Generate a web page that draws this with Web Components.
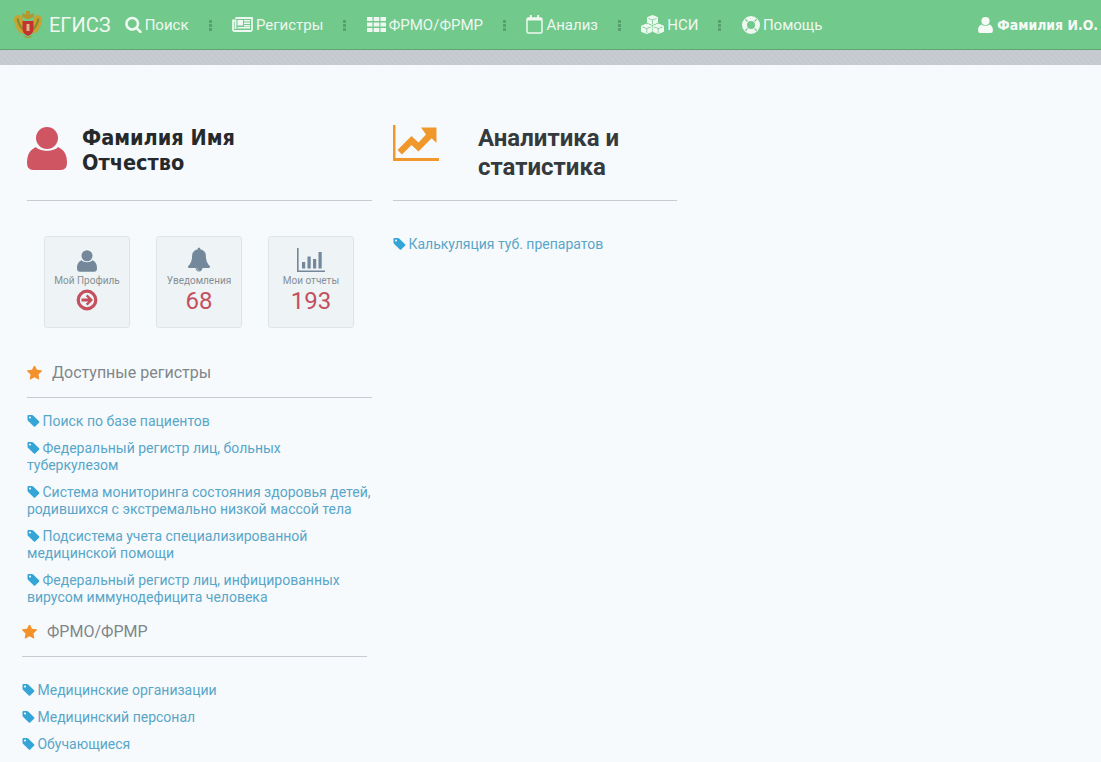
<!DOCTYPE html>
<html lang="ru">
<head>
<meta charset="utf-8">
<title>ЕГИСЗ</title>
<style>
  html, body { margin: 0; height: 762px; overflow: hidden; background: #f7fafd; font-family: Roboto, "Liberation Sans", sans-serif; }
</style>
</head>
<body>
<top-bar>
  <nav-link icon="search" iw="17">Поиск</nav-link>
  <nav-sep></nav-sep>
  <nav-link icon="news" iw="21">Регистры</nav-link>
  <nav-sep></nav-sep>
  <nav-link icon="grid" iw="19">ФРМО/ФРМР</nav-link>
  <nav-sep></nav-sep>
  <nav-link icon="calendar" iw="17">Анализ</nav-link>
  <nav-sep></nav-sep>
  <nav-link icon="cubes" iw="23">НСИ</nav-link>
  <nav-sep></nav-sep>
  <nav-link icon="ring" iw="18">Помощь</nav-link>
</top-bar>
<page-main>
  <page-col style="width:345px">
    <big-head icon="user" color="#cf5563" iw="40" ih="43" gap="15" fs="21.5" lh="25" font="'DejaVu Sans Condensed','DejaVu Sans'" ink="#26292c" top="2" tw="170" shift="0">Фамилия Имя Отчество</big-head>
    <stat-row>
      <stat-card icon="user" iw="20" ih="22" label="Мой Профиль"><x-icon name="arrow" w="22" h="22" style="color:#c4505e;margin-top:-3px"></x-icon></stat-card>
      <stat-card icon="bell" iw="24" ih="25" label="Уведомления">68</stat-card>
      <stat-card icon="bars" iw="28" ih="24" label="Мои отчеты">193</stat-card>
    </stat-row>
    <sect-head>Доступные регистры</sect-head>
    <tag-link>Поиск по базе пациентов</tag-link>
    <tag-link>Федеральный регистр лиц, больных туберкулезом</tag-link>
    <tag-link>Система мониторинга состояния здоровья детей, родившихся с экстремально низкой массой тела</tag-link>
    <tag-link>Подсистема учета специализированной медицинской помощи</tag-link>
    <tag-link>Федеральный регистр лиц, инфицированных вирусом иммунодефицита человека</tag-link>
    <sect-head style="margin:17px 5px 0 -5px;--after:25px">ФРМО/ФРМР</sect-head>
    <tag-link style="margin-left:-5px">Медицинские организации</tag-link>
    <tag-link style="margin-left:-5px">Медицинский персонал</tag-link>
    <tag-link style="margin-left:-5px">Обучающиеся</tag-link>
  </page-col>
  <page-col style="width:284px">
    <big-head icon="chart" color="#f0982c" iw="46" ih="36" gap="39" fs="24" lh="29" font="Roboto" ink="#353a3e" top="0" tw="200" shift="-1">Аналитика и статистика</big-head>
    <div style="height:35px"></div>
    <tag-link>Калькуляция туб. препаратов</tag-link>
  </page-col>
</page-main>

<script>
const ICONS = {
  search: '<svg viewBox="64 64 1664 1700"><path fill="currentColor" d="M1216 832q0-185-131.500-316.500t-316.500-131.500-316.500 131.500-131.500 316.500 131.500 316.500 316.500 131.500 316.500-131.500 131.500-316.500zm512 832q0 52-38 90t-90 38q-54 0-90-38l-343-342q-179 124-399 124-143 0-273.500-55.500t-225-150-150-225-55.500-273.500 55.500-273.500 150-225 225-150 273.500-55.500 273.500 55.500 225 150 150 225 55.500 273.500q0 220-124 399l343 343q37 37 37 90z"/></svg>',
  bell: '<svg viewBox="0 0 1792 1792"><path fill="currentColor" d="M912 1696q0-16-16-16-59 0-101.500-42.500t-42.500-101.500q0-16-16-16t-16 16q0 73 51.500 124.500t124.500 51.500q16 0 16-16zm816-288q0 52-38 90t-90 38h-448q0 106-75 181t-181 75-181-75-75-181h-448q-52 0-90-38t-38-90q50-42 91-88t85-119.500 74.500-158.500 50-206 19.500-260q0-152 117-282.500t307-158.500q-8-19-8-39 0-40 28-68t68-28 68 28 28 68q0 20-8 39 190 28 307 158.500t117 282.500q0 139 19.500 260t50 206 74.500 158.500 85 119.500 91 88z"/></svg>',
  tag: '<svg viewBox="128 128 1536 1536"><path fill="currentColor" d="M576 448q0-53-37.500-90.500t-90.500-37.500-90.500 37.500-37.500 90.500 37.500 90.500 90.500 37.500 90.500-37.500 37.500-90.500zm1067 576q0 53-37 90l-491 492q-39 37-91 37-53 0-90-37l-715-716q-38-37-64.500-101t-26.500-117v-416q0-52 38-90t90-38h416q53 0 117 26.500t102 64.500l715 714q37 39 37 91z"/></svg>',
  star: '<svg viewBox="64 128 1664 1536"><path fill="currentColor" d="M1728 647q0 22-26 48l-363 354 86 500q1 7 1 20 0 21-10.500 35.500t-30.500 14.500q-19 0-40-12l-449-236-449 236q-22 12-40 12-21 0-31.500-14.500t-10.500-35.500q0-6 2-20l86-500-364-354q-25-27-25-48 0-37 56-46l502-73 225-455q19-41 49-41t49 41l225 455 502 73q56 9 56 46z"/></svg>',
  user: '<svg viewBox="0 0 40 43"><circle cx="20" cy="11" r="11" fill="currentColor"/><path fill="currentColor" d="M0 36C0 27 3 23 9 20C13 25 27 25 31 20C37 23 40 27 40 36Q40 43 34 43H6Q0 43 0 36Z"/></svg>',
  news: '<svg viewBox="0 0 21 15"><path fill="none" stroke="currentColor" stroke-width="1.8" d="M3.500 1H20V12.500Q20 14 18.500 14H2.500Q1 14 1 12.500V3.500H3.500V12"/><path fill="currentColor" d="M5.500 3H11V8.500H5.500ZM12 3H18V4.500H12ZM12 5.500H18V7H12ZM12 8H18V9.500H12ZM5.500 10H18V11.500H5.500Z"/></svg>',
  grid: '<svg viewBox="0 0 19 15"><path fill="currentColor" d="M0 0h5.500v4H0ZM6.700 0h5.600v4H6.700ZM13.500 0H19v4h-5.500ZM0 5.500h5.500v4H0ZM6.700 5.500h5.600v4H6.700ZM13.500 5.500H19v4h-5.500ZM0 11h5.500v4H0ZM6.700 11h5.600v4H6.700ZM13.500 11H19v4h-5.500Z"/></svg>',
  calendar: '<svg viewBox="0 0 17 19"><path fill="none" stroke="currentColor" stroke-width="1.500" d="M1 4.500Q1 3 2.500 3H14.500Q16 3 16 4.500V16.500Q16 18 14.500 18H2.500Q1 18 1 16.500Z"/><path fill="currentColor" d="M1 3h15v2.500H1ZM3.800 0h2v4.500h-2ZM11.200 0h2v4.500h-2Z"/></svg>',
  cubes: '<svg viewBox="0 0 23 19"><g fill="currentColor" stroke="currentColor" stroke-width="1" stroke-linejoin="round"><path d="M11.500 .5L16.500 2.500V7.500L11.500 9.500L6.500 7.500V2.500Z"/><path d="M5.800 9L10.800 11V16.500L5.800 18.500L.5 16.500V11Z"/><path d="M17.200 9L22.500 11V16.500L17.200 18.500L12.200 16.500V11Z"/></g><g fill="none" stroke="#72c98c" stroke-width=".8"><path d="M7.500 3.500L11.500 5L15.500 3.500M11.500 5V9M1.500 12L5.800 13.500L9.800 12M5.800 13.500V18M13.200 12L17.200 13.500L21.500 12M17.200 13.500V18"/></g></svg>',
  ring: '<svg viewBox="0 0 18 18"><circle cx="9" cy="9" r="6.500" fill="none" stroke="currentColor" stroke-width="5"/><path fill="none" stroke="#72c98c" stroke-width="1.100" d="M3.200 3.200L5.500 5.500M14.800 3.200L12.500 5.500M3.200 14.800L5.500 12.500M14.800 14.800L12.500 12.500"/></svg>',
  bars: '<svg viewBox="0 0 28 24"><path fill="currentColor" d="M0 0h1.600v22.400H28V24H0ZM5 14h3.200v6.500H5ZM10.500 8.500h3.200v12h-3.200ZM16 11h3.200v9.500H16ZM21.500 4h3.200v16.500h-3.200Z"/></svg>',
  arrow: '<svg viewBox="0 0 22 22"><circle cx="11" cy="11" r="8.800" fill="none" stroke="currentColor" stroke-width="3.200"/><path fill="currentColor" d="M11.500 5.500L17 11L11.500 16.500L9.800 14.800L12.300 12.500H5.500V9.500H12.300L9.800 7.200Z"/></svg>',
  chart: '<svg viewBox="0 0 46 36"><path fill="currentColor" d="M0 0h2.500v33H46v3H0Z"/><path fill="currentColor" d="M28 2.500H43.500V18L38.600 13.300L25.500 26.500L18.500 20L9 29.500L4.500 25L18.500 11L25.500 17.500L33 9.500Z"/></svg>',
  arms: '<svg viewBox="0 0 30 30"><path fill="#c9a22f" d="M1 8C3 5 6 4 8 6L10 10L12 14V21L9 24C5 22 1 16 1 8Z"/><path fill="#c9a22f" d="M29 8C27 5 24 4 22 6L20 10L18 14V21L21 24C25 22 29 16 29 8Z"/><path fill="#7f8e35" d="M3.500 9C4.500 13 6 17 9 20L10 18C7.500 15 6 12 5.500 8ZM26.500 9C25.500 13 24 17 21 20L20 18C22.500 15 24 12 24.500 8Z"/><path fill="#b9952c" d="M13 1H17V4L19 7L17 9H13L11 7L13 4Z"/><path fill="#a89a38" d="M9.500 3L12.500 4.500L12 8L9 7ZM20.500 3L17.500 4.500L18 8L21 7Z"/><path fill="#c2352e" d="M9.500 11H20.500V19Q20.500 24 15 26Q9.500 24 9.500 19Z"/><path fill="#e3b38a" d="M13.500 14H16.500V21H13.500Z"/><path fill="#a89a38" d="M10 25L13 28H17L20 25L15 27Z"/></svg>'
};

function el(html) {
  const t = document.createElement('template');
  t.innerHTML = html;
  return t.content;
}

class XIcon extends HTMLElement {
  connectedCallback() {
    const w = this.getAttribute('w') || 14;
    const h = this.getAttribute('h') || w;
    this.attachShadow({ mode: 'open' }).append(el(`
      <style>
        :host { display: inline-block; width: ${w}px; height: ${h}px; line-height: 0; flex: none; }
        svg { width: 100%; height: 100%; display: block; }
      </style>
      ${ICONS[this.getAttribute('name')]}`));
  }
}
customElements.define('x-icon', XIcon);

class TopBar extends HTMLElement {
  connectedCallback() {
    this.attachShadow({ mode: 'open' }).append(el(`
      <style>
        :host { display: block; }
        .bar {
          height: 49px; background: #72c98c; border-bottom: 1px solid #5da674;
          display: flex; align-items: center; color: #eef8f1; white-space: nowrap;
        }
        .logo { display: flex; align-items: center; padding: 0 14px 0 13px; font: 400 20px Roboto, sans-serif; }
        .logo span { margin-left: 6px; }
        nav { display: flex; align-items: center; }
        .me { margin-left: auto; padding-right: 3px; display: flex; align-items: center; gap: 4px;
          font: 700 13.900px "DejaVu Sans Condensed", "DejaVu Sans", sans-serif; color: #f6fbf7; }
        .strip {
          height: 15px; background-color: #c4c8cf;
          background-image: repeating-linear-gradient(45deg, rgba(255,255,255,.07) 0 2px, transparent 2px 4px);
        }
      </style>
      <div class="bar">
        <div class="logo"><x-icon name="arms" w="30" h="30"></x-icon><span>ЕГИСЗ</span></div>
        <nav><slot></slot></nav>
        <div class="me"><x-icon name="user" w="15" h="16"></x-icon>Фамилия И.О.</div>
      </div>
      <div class="strip"></div>`));
  }
}
customElements.define('top-bar', TopBar);

class NavLink extends HTMLElement {
  connectedCallback() {
    const name = this.getAttribute('icon');
    const w = +this.getAttribute('iw');
    const ratio = { search: 1, news: 15 / 21, grid: 15 / 19, calendar: 19 / 17, cubes: 19 / 23, ring: 1 }[name];
    this.attachShadow({ mode: 'open' }).append(el(`
      <style>
        :host { display: inline-flex; align-items: center; gap: 3px; font: 400 15px Roboto, sans-serif; color: #eef8f1; }
      </style>
      <x-icon name="${name}" w="${w}" h="${Math.round(w * ratio)}"></x-icon><slot></slot>`));
  }
}
customElements.define('nav-link', NavLink);

class NavSep extends HTMLElement {
  connectedCallback() {
    this.attachShadow({ mode: 'open' }).append(el(`
      <style>
        :host { display: block; width: 3px; height: 11px; margin: 2px 20.400px 0 20px;
          background: repeating-linear-gradient(#5a9f72 0 3px, transparent 3px 4px); }
      </style>`));
  }
}
customElements.define('nav-sep', NavSep);

class PageMain extends HTMLElement {
  connectedCallback() {
    this.attachShadow({ mode: 'open' }).append(el(`
      <style>
        :host { display: flex; gap: 21px; padding: 60px 0 0 27px; }
      </style>
      <slot></slot>`));
  }
}
customElements.define('page-main', PageMain);

class PageCol extends HTMLElement {
  connectedCallback() {
    this.attachShadow({ mode: 'open' }).append(el(`
      <style>:host { display: block; flex: none; }</style><slot></slot>`));
  }
}
customElements.define('page-col', PageCol);

class BigHead extends HTMLElement {
  connectedCallback() {
    const a = n => this.getAttribute(n);
    this.attachShadow({ mode: 'open' }).append(el(`
      <style>
        :host { display: block; height: 75px; border-bottom: 1px solid #c6ccd2; }
        .row { display: flex; align-items: flex-start; gap: ${a('gap')}px; }
        x-icon { color: ${a('color')}; margin-top: ${a('top')}px; }
        h2 { margin: ${a('shift')}px 0 0; width: ${a('tw')}px; font: 700 ${a('fs')}px/${a('lh')}px ${a('font')}, sans-serif; color: ${a('ink')}; }
      </style>
      <div class="row">
        <x-icon name="${a('icon')}" w="${a('iw')}" h="${a('ih')}"></x-icon>
        <h2><slot></slot></h2>
      </div>`));
  }
}
customElements.define('big-head', BigHead);

class StatRow extends HTMLElement {
  connectedCallback() {
    this.attachShadow({ mode: 'open' }).append(el(`
      <style>:host { display: flex; gap: 26px; padding: 35px 0 0 17px; }</style><slot></slot>`));
  }
}
customElements.define('stat-row', StatRow);

class StatCard extends HTMLElement {
  connectedCallback() {
    const a = n => this.getAttribute(n);
    this.attachShadow({ mode: 'open' }).append(el(`
      <style>
        :host {
          display: flex; flex-direction: column; align-items: center; box-sizing: border-box;
          width: 86px; height: 92px; padding-top: 11px;
          background: #eef3f6; border: 1px solid #dde4e8; border-radius: 3px;
        }
        .ico { height: 24px; display: flex; align-items: flex-end; color: #73889a; }
        .label { margin-top: 2px; font: 400 10px/14px Roboto, sans-serif; color: #868f95; }
        .val { font: 400 24px/27px Roboto, sans-serif; color: #c4505e; height: 27px; display: flex; align-items: center; }
      </style>
      <div class="ico"><x-icon name="${a('icon')}" w="${a('iw')}" h="${a('ih')}"></x-icon></div>
      <div class="label">${a('label')}</div>
      <div class="val"><slot></slot></div>`));
  }
}
customElements.define('stat-card', StatCard);

class SectHead extends HTMLElement {
  connectedCallback() {
    this.attachShadow({ mode: 'open' }).append(el(`
      <style>
        :host { display: block; margin-top: 36px; }
        .row { display: flex; align-items: center; gap: 10px; height: 18px; padding-bottom: 15px;
          border-bottom: 1px solid #c6ccd2; font: 400 16px/18px Roboto, sans-serif; color: #7f868b; margin-bottom: var(--after, 15px); }
        x-icon { color: #f4912a; }
      </style>
      <div class="row"><x-icon name="star" w="15" h="14"></x-icon><span><slot></slot></span></div>`));
  }
}
customElements.define('sect-head', SectHead);

class TagLink extends HTMLElement {
  connectedCallback() {
    this.attachShadow({ mode: 'open' }).append(el(`
      <style>
        :host { display: block; margin-bottom: 10px; font: 400 14px/17px Roboto, sans-serif; color: #58a6c8; }
        x-icon { color: #35a5d8; vertical-align: -1px; margin-right: -1px; }
      </style>
      <x-icon name="tag" w="13" h="12"></x-icon> <slot></slot>`));
  }
}
customElements.define('tag-link', TagLink);
</script>
</body>
</html>
